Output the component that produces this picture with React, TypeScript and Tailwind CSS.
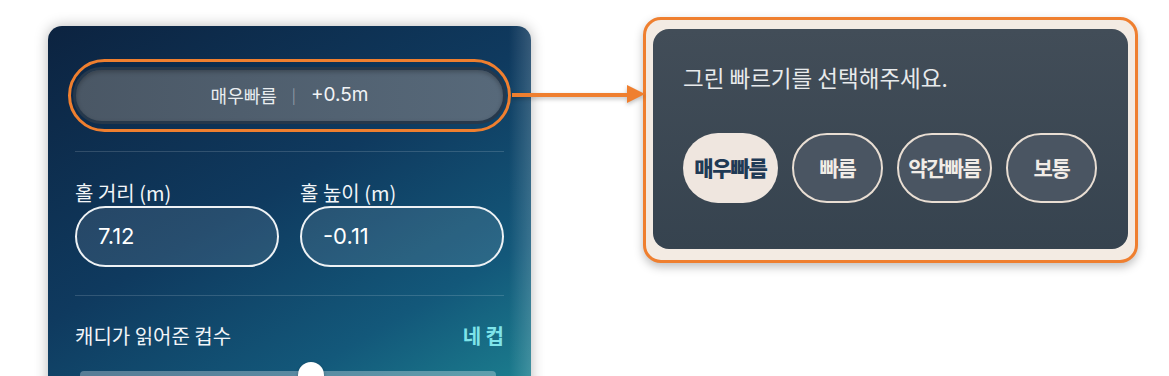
import { useState } from "react";

const SPEEDS = [
  { label: "매우빠름", w: "w-[95px]" },
  { label: "빠름", w: "w-[91px]" },
  { label: "약간빠름", w: "w-[95px]" },
  { label: "보통", w: "w-[91px]" },
];

const FONT = { fontFamily: '"Noto Sans CJK KR", Inter, sans-serif' };

export default function App() {
  const [speed, setSpeed] = useState("매우빠름");

  return (
    <main
      className="relative h-[376px] w-[1169px] overflow-hidden bg-white"
      style={FONT}
    >
      <div className="flex items-start pl-[48px] pt-[17px]">
        {/* 왼쪽 패널 */}
        <section className="mt-[9px] h-[380px] w-[483px] shrink-0 rounded-t-[14px] bg-[linear-gradient(to_left,rgba(255,255,255,0.16),rgba(255,255,255,0)_22px),linear-gradient(150deg,#0c2340_0%,#0f3a5f_45%,#13587a_75%,#1d8592_100%)] px-[27px] pt-[33px] shadow-[0_0_14px_rgba(0,0,0,0.28)]">
          <div className="-mx-[7px] rounded-full border-[3px] border-[#ef7f2f] px-[2px] py-[5px]">
            <div className="flex h-[57px] items-center justify-center gap-[15px] rounded-full border-[3px] border-[#26384b] bg-[linear-gradient(90deg,#4a5765,#57697a)] shadow-[inset_0_2px_4px_rgba(0,0,0,0.25)]">
              <span className="text-[18px] text-[#e9edf0]">{speed}</span>
              <span className="text-[15px] text-[#8e9aa5]">|</span>
              <span className="text-[19px] text-[#f2f4f6]" style={{ fontFamily: "Inter, sans-serif" }}>
                +0.5m
              </span>
            </div>
          </div>

          <div className="mt-[19px] h-px bg-white/15" />

          <div className="mt-[28px] grid grid-cols-2 gap-x-[21px]">
            {[
              { label: "홀 거리 (m)", value: "7.12" },
              { label: "홀 높이 (m)", value: "-0.11" },
            ].map((f) => (
              <label key={f.label} className="flex flex-col">
                <span className="text-[20px] leading-[26px] text-[#f2f5f8]">{f.label}</span>
                <span
                  className="flex h-[61px] items-center rounded-full border-2 border-[#eef2f5] bg-white/10 pl-[21px] text-[22px] text-white"
                  style={{ fontFamily: "Inter, sans-serif" }}
                >
                  {f.value}
                </span>
              </label>
            ))}
          </div>

          <div className="mt-[28px] h-px bg-white/15" />

          <div className="mt-[27px] flex items-center justify-between leading-[26px]">
            <span className="text-[20px] text-[#f2f5f8]">캐디가 읽어준 컵수</span>
            <span className="text-[20px] font-bold text-[#7fe4ea]">네 컵</span>
          </div>

          <div className="relative ml-[5px] mr-[8px] mt-[22px] h-[8px] rounded-full bg-white/30">
            <div className="absolute -top-[9px] left-[218px] h-[26px] w-[26px] rounded-full bg-white shadow-[0_1px_3px_rgba(0,0,0,0.3)]" />
          </div>
        </section>

        {/* 오른쪽 선택 팝업 */}
        <section className="ml-[112px] w-[495px] rounded-[18px] border-[3px] border-[#ef7f2f] bg-[#f3ebe3] px-[7px] pb-[11px] pt-[9px] shadow-[0_4px_10px_rgba(0,0,0,0.25)]">
          <div className="h-[220px] rounded-[16px] bg-[linear-gradient(180deg,#424d58,#36434f)] pl-[30px] pt-[34px]">
            <p className="text-[22.5px] leading-[28px] text-[#e8eaec]">그린 빠르기를 선택해주세요.</p>
            <div className="mt-[42px] flex gap-[14px]">
              {SPEEDS.map((s) => (
                <button
                  key={s.label}
                  onClick={() => setSpeed(s.label)}
                  className={`${s.w} flex h-[70px] items-center justify-center rounded-full text-[21px] tracking-[-1.2px] ${
                    speed === s.label
                      ? "bg-[#efe6df] font-extrabold text-[#1f3a55]"
                      : "border-2 border-[#e9ded3] bg-[#4a5562] font-bold text-[#f1ece7]"
                  }`}
                >
                  {s.label}
                </button>
              ))}
            </div>
          </div>
        </section>
      </div>

      {/* 연결 화살표 */}
      <svg
        className="pointer-events-none absolute left-0 top-0 drop-shadow-[0_2px_2px_rgba(0,0,0,0.25)]"
        width="1169"
        height="376"
      >
        <line x1="512" y1="95" x2="630" y2="95" stroke="#ef7f2f" strokeWidth="4" />
        <polygon points="627,85 645,94 627,103" fill="#ef7f2f" />
      </svg>
    </main>
  );
}
